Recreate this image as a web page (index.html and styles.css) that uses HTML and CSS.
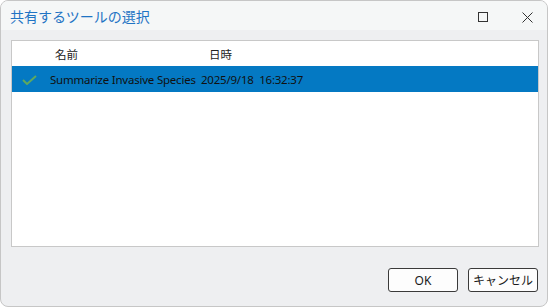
FILE: index.html
```html
<!DOCTYPE html>
<html lang="ja">
<head>
<meta charset="utf-8">
<link rel="stylesheet" href="styles.css">
</head>
<body>
<div class="window">
  <div class="titlebar">
    <div class="title">共有するツールの選択</div>
    <div class="controls">
      <span class="ctl max"><svg width="10" height="10" viewBox="0 0 10 10"><rect x="0.5" y="0.5" width="9" height="9" fill="none" stroke="#333" stroke-width="1"/></svg></span>
      <span class="ctl close"><svg width="11" height="11" viewBox="0 0 11 11"><path d="M0.5 0.5 L10.5 10.5 M10.5 0.5 L0.5 10.5" stroke="#333" stroke-width="1" fill="none"/></svg></span>
    </div>
  </div>
  <div class="content">
    <div class="list">
      <div class="row header">
        <div class="c-check"></div>
        <div class="c-name">名前</div>
        <div class="c-date">日時</div>
      </div>
      <div class="row selected">
        <div class="c-check"><svg width="15" height="10" viewBox="0 0 15 10"><path d="M1 5 L5 9 L14 1" stroke="#5fa85f" stroke-width="2" fill="none"/></svg></div>
        <div class="c-name">Summarize Invasive Species</div>
        <div class="c-date">2025/9/18&nbsp;&nbsp;16:32:37</div>
      </div>
    </div>
    <div class="buttons">
      <button class="btn">OK</button>
      <button class="btn">キャンセル</button>
    </div>
  </div>
</div>
</body>
</html>
```
FILE: styles.css
```css
html, body {
  margin: 0;
  padding: 0;
  background: #ffffff;
}
body {
  font-family: "Noto Sans", "Noto Sans CJK JP", sans-serif;
  font-size: 12px;
  color: #1a1a1a;
}
.window {
  box-sizing: border-box;
  width: 548px;
  height: 307px;
  border: 1px solid #c6c6c6;
  border-radius: 8px;
  overflow: hidden;
  background: #eeeff1;
  display: flex;
  flex-direction: column;
}
.titlebar {
  height: 29px;
  background: #f5f7f7;
  display: flex;
  align-items: center;
  justify-content: space-between;
}
.title {
  padding-left: 9px;
  font-family: "Noto Sans CJK JP", sans-serif;
  font-size: 14px;
  color: #1f74c4;
  margin-top: 1px;
}
.controls {
  display: flex;
  align-items: center;
  margin-top: 3px;
}
.ctl {
  display: flex;
  line-height: 0;
}
.max {
  margin-right: 34px;
}
.close {
  margin-right: 14px;
}
.content {
  flex: 1;
  display: flex;
  flex-direction: column;
  padding: 10px 9px 0 10px;
}
.list {
  box-sizing: border-box;
  width: 528px;
  height: 207px;
  background: #ffffff;
  border: 1px solid #c8c8c8;
}
.row {
  display: flex;
  align-items: center;
}
.header {
  height: 25px;
  font-family: "Noto Sans CJK JP", sans-serif;
  font-size: 11.5px;
  color: #222;
}
.header .c-name {
  padding-left: 5px;
}
.header .c-date {
  padding-left: 3px;
}
.selected {
  height: 26px;
  background: #0479c3;
  color: #111;
  font-size: 11.5px;
  letter-spacing: -0.22px;
}
.c-check {
  width: 38px;
  display: flex;
  justify-content: flex-end;
  padding-top: 1px;
}
.c-check svg {
  margin-right: 13px;
}
.c-name {
  width: 151px;
  white-space: nowrap;
}
.c-date {
  white-space: nowrap;
}
.buttons {
  display: flex;
  justify-content: flex-end;
  gap: 10px;
  margin-top: 21px;
  padding-right: 0;
}
.btn {
  box-sizing: border-box;
  width: 70px;
  height: 24px;
  border: 1px solid #3a3a3a;
  border-radius: 3px;
  background: #fdfdfd;
  font-family: "Noto Sans", "Noto Sans CJK JP", sans-serif;
  font-size: 12px;
  color: #1a1a1a;
  padding: 0;
}
```
